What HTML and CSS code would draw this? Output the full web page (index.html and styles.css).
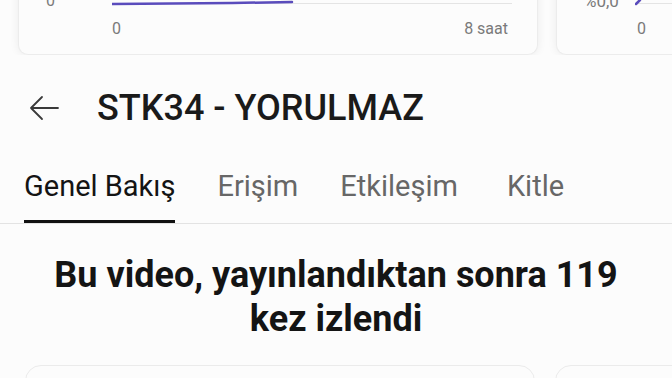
FILE: index.html
```html
<!DOCTYPE html>
<html lang="tr">
<head>
<meta charset="utf-8">
<title>STK34 - YORULMAZ</title>
<link rel="stylesheet" href="styles.css">
</head>
<body>
<div class="strip">
  <div class="chart-card chart-card--wide">
    <div class="plot-row">
      <span class="y-label">0</span>
      <svg class="plot" width="400" height="30" viewBox="0 0 400 30">
        <line x1="0" y1="23.5" x2="400" y2="23.5" stroke="#e4e4e4" stroke-width="1"/>
        <polyline points="0,24 60,23.5 120,23 180,22" fill="none" stroke="#5a4cbc" stroke-width="2.5" stroke-linecap="round"/>
      </svg>
    </div>
    <div class="x-labels">
      <span>0</span>
      <span>8 saat</span>
    </div>
  </div>
  <div class="chart-card chart-card--narrow">
    <div class="plot-row">
      <span class="y-label y-label--pct">%0,0</span>
      <svg class="plot" width="60" height="30" viewBox="0 0 60 30">
        <line x1="2" y1="23.5" x2="60" y2="23.5" stroke="#e4e4e4" stroke-width="1"/>
        <line x1="1" y1="24" x2="5" y2="20" stroke="#5a4cbc" stroke-width="2.5" stroke-linecap="round"/>
      </svg>
    </div>
    <div class="x-labels x-labels--short">
      <span>0</span>
    </div>
  </div>
</div>

<header class="topbar">
  <svg class="back" width="30" height="26" viewBox="0 0 30 26">
    <path d="M29 13 H2 M13 2 L2 13 L13 24" fill="none" stroke="#3a3a3a" stroke-width="1.8" stroke-linecap="round" stroke-linejoin="round"/>
  </svg>
  <h1 class="title">STK34 - YORULMAZ</h1>
</header>

<nav class="tabs">
  <span class="tab tab--active">Genel Bakış</span>
  <span class="tab">Erişim</span>
  <span class="tab">Etkileşim</span>
  <span class="tab tab--last">Kitle</span>
</nav>

<h2 class="headline">Bu video, yayınlandıktan sonra 119<br>kez izlendi</h2>

<div class="cards">
  <div class="card card--main"></div>
  <div class="card card--next"></div>
</div>
</body>
</html>
```

FILE: styles.css
```css
* { box-sizing: border-box; }

html, body {
  margin: 0;
  padding: 0;
  background: #fcfcfc;
  font-family: Roboto, "Noto Sans", sans-serif;
  overflow: hidden;
  width: 672px;
  height: 378px;
}

.strip {
  height: 55px;
  display: flex;
  align-items: flex-end;
  gap: 18px;
  padding-left: 18px;
  overflow: hidden;
}

.chart-card {
  flex: none;
  height: 75px;
  background: #fcfcfc;
  border: 1px solid #ececec;
  border-top: none;
  border-radius: 0 0 10px 10px;
  box-shadow: 0 0 10px rgba(0, 0, 0, 0.07);
  padding-left: 27px;
}

.chart-card--wide { width: 520px; }
.chart-card--narrow { width: 140px; }

.plot-row {
  display: flex;
  align-items: flex-end;
  height: 30px;
}

.y-label {
  width: 66px;
  font-size: 16px;
  line-height: 18px;
  color: #7a7a7a;
}

.y-label--pct { width: 53px; font-size: 17px; }

.plot { display: block; flex: none; }

.x-labels {
  display: flex;
  justify-content: space-between;
  margin: 10px 0 0 66px;
  width: 396px;
  font-size: 16px;
  line-height: 18px;
  color: #7a7a7a;
}

.x-labels--short { margin-left: 53px; width: 40px; }

.topbar {
  height: 105px;
  display: flex;
  align-items: center;
  padding-left: 29px;
}

.back { flex: none; margin-right: 38px; }

.title {
  margin: 0;
  font-size: 36px;
  font-weight: 500;
  color: #1a1a1a;
}

.tabs {
  display: flex;
  gap: 42px;
  padding-left: 24px;
  border-bottom: 1px solid #e3e3e3;
  height: 64px;
}

.tab {
  padding-top: 9px;
  line-height: 34px;
  font-size: 29px;
  color: #676767;
  border-bottom: 3px solid transparent;
  height: 63px;
}

.tab--active {
  color: #141414;
  border-bottom-color: #111;
}

.tab--last { margin-left: 7px; }

.headline {
  margin: 29px 0 0;
  text-align: center;
  font-size: 36px;
  line-height: 44px;
  font-weight: 700;
  color: #141414;
}

.cards {
  display: flex;
  gap: 20px;
  padding-left: 25px;
  margin-top: 24px;
}

.card {
  flex: none;
  height: 60px;
  background: #fcfcfc;
  border: 1px solid #ebebeb;
  border-radius: 16px;
}

.card--main { width: 510px; }
.card--next { width: 200px; }
```
